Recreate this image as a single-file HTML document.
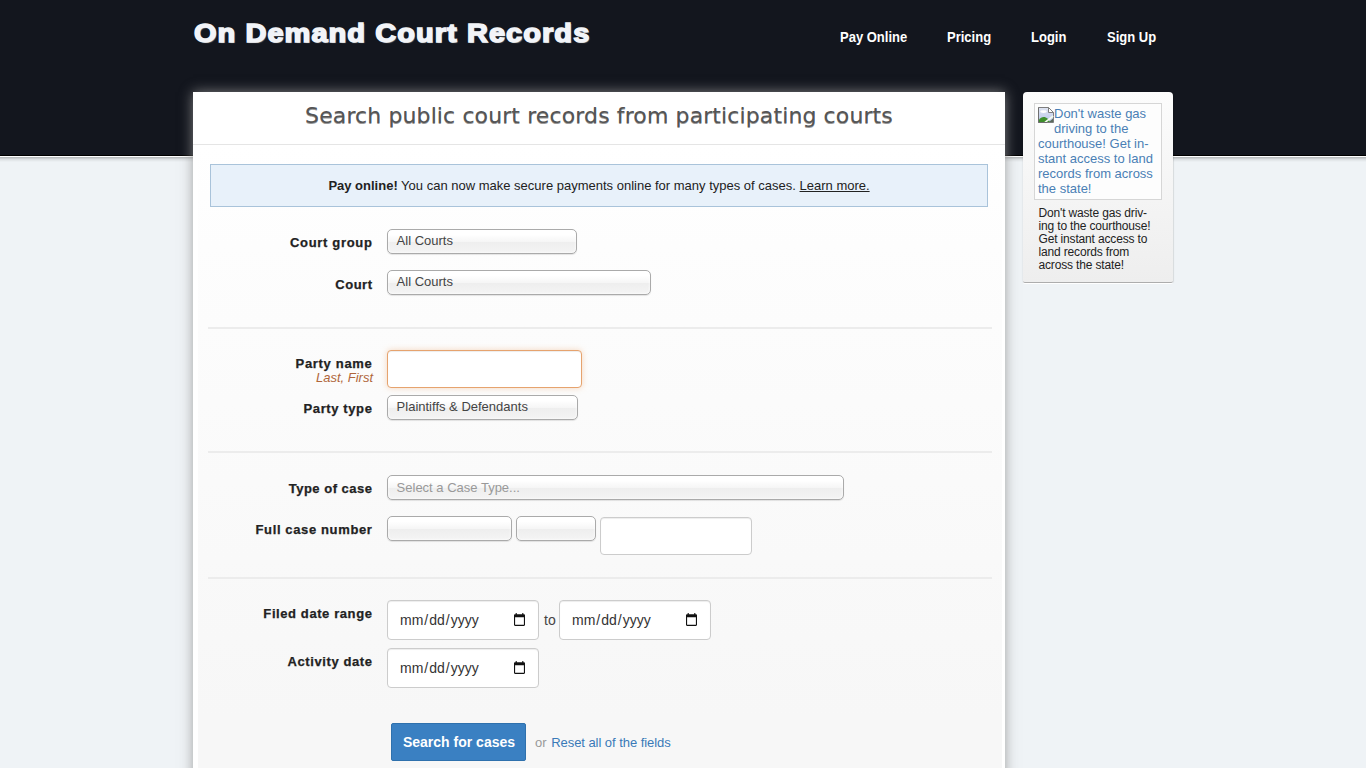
<!DOCTYPE html>
<html lang="en">
<head>
<meta charset="utf-8">
<title>On Demand Court Records</title>
<style>
*{box-sizing:border-box;}
html,body{margin:0;padding:0;}
body{width:1366px;height:768px;overflow:hidden;position:relative;background:#eff3f6;font-family:"Liberation Sans",Arial,sans-serif;font-size:13px;color:#222;}
a{text-decoration:none;color:inherit;}
#topband{position:absolute;left:0;top:0;width:1366px;height:156px;background:#13161e;border-bottom:1px solid #000;box-shadow:0 1px 0 #fff;}
#bandshadow{position:absolute;left:0;top:157px;width:1366px;height:5px;background:linear-gradient(rgba(0,0,0,.26),rgba(0,0,0,.08) 50%,rgba(0,0,0,0));}
#logo{position:absolute;left:194px;top:13px;margin:0;font-family:"Liberation Sans",Arial,sans-serif;font-weight:bold;font-size:26px;line-height:40px;color:#f2f4f8;white-space:nowrap;-webkit-text-stroke:1.5px #f2f4f8;text-shadow:1px 1px 1px #8a8a8a;letter-spacing:1px;transform:scale(1.111,.97);transform-origin:0 30px;}
#nav a{position:absolute;top:29px;font-weight:bold;font-size:14px;transform:scaleX(.929);transform-origin:0 0;line-height:16px;color:#fff;white-space:nowrap;}
#main{position:absolute;left:193px;top:92px;width:812px;height:700px;background:#fff;box-shadow:0 0 12px rgba(145,145,145,.85);}
#inner{position:absolute;left:5px;top:54px;width:804px;height:646px;background:linear-gradient(#ffffff 0px,#fdfdfd 100px,#f7f7f7 570px);}
#main h2{position:absolute;left:0;top:0;width:812px;height:53px;margin:0;border-bottom:1px solid #e5e5e5;background:#fff;text-align:center;font-family:"DejaVu Sans",Verdana,sans-serif;font-weight:normal;font-size:22px;line-height:48px;letter-spacing:.11px;color:#555;text-shadow:0 1px 0 #999;white-space:nowrap;}
#alert{position:absolute;left:17px;top:72px;width:778px;height:43px;border:1px solid #a9c3da;background:#e8f1fa;text-align:center;font-size:13px;line-height:41px;color:#222;white-space:nowrap;}
#alert a{text-decoration:underline;}
.lbl{position:absolute;left:0;width:179.5px;text-align:right;font-weight:bold;font-size:13px;line-height:16px;color:#222;white-space:nowrap;letter-spacing:.5px;-webkit-text-stroke:.25px #222;}
.hint{position:absolute;left:0;width:180px;text-align:right;font-style:italic;font-size:13px;line-height:14px;color:#b0663a;white-space:nowrap;}
.chosen{position:absolute;height:25px;border:1px solid #aaa;border-radius:5px;background:linear-gradient(#fff 20%,#f6f6f6 50%,#eee 52%,#f4f4f4 100%);box-shadow:0 0 3px #fff inset,0 1px 1px rgba(0,0,0,.1);padding-left:8.6px;font-size:13px;line-height:21px;color:#444;white-space:nowrap;overflow:hidden;}
.chosen.ph{color:#999;line-height:23px;}
.inp{position:absolute;height:38px;border:1px solid #ccc;border-radius:4px;background:#fff;box-shadow:inset 0 1px 1px rgba(0,0,0,.075);}
.inp.focus{border-color:#e6a36e;box-shadow:inset 0 1px 1px rgba(0,0,0,.075),0 0 6px rgba(238,162,100,.4);}
.date{position:absolute;width:152px;height:40px;border:1px solid #ccc;border-radius:4px;background:#fff;box-shadow:inset 0 1px 1px rgba(0,0,0,.075);font-size:14px;line-height:38px;color:#333;padding-left:11px;white-space:nowrap;}
.date span{padding:0 1px;}
.date svg{position:absolute;left:126px;top:12px;}
.hr{position:absolute;left:15px;width:784px;height:2px;background:#ececec;}
#btn{position:absolute;left:198px;top:631px;width:135px;height:38px;background:#3a80c2;border:1px solid #2f71ad;border-radius:2px;color:#fff;font-weight:bold;font-size:14px;line-height:36px;text-align:center;white-space:nowrap;padding-left:1px;}
#or{position:absolute;left:342px;top:643px;font-size:13px;line-height:15px;color:#999;white-space:nowrap;}
#or a{color:#3a7ab8;margin-left:1px;letter-spacing:-.05px;}
#side{position:absolute;left:1023px;top:92px;width:150px;height:191px;border-radius:4px 4px 2px 2px;background:linear-gradient(#fcfcfc,#eee);border-bottom:1px solid #adadad;box-shadow:0 1px 0 #fff,1px 0 1px rgba(0,0,0,.1),-1px 0 1px rgba(0,0,0,.04);}
#side .img{position:absolute;left:11px;top:11px;width:128px;height:97px;border:1px solid #d6d6d6;background:#fdfdfd;padding:2px 2px 0 3px;font-size:13px;line-height:15px;color:#4a7fb5;text-align:left;}
#side .img svg{float:left;margin:1px 0 0 0;}
#side .txt{position:absolute;left:15.5px;top:115px;width:118px;font-size:12px;line-height:13px;letter-spacing:-.16px;color:#222;}
</style>
</head>
<body>
<div id="topband"></div>
<div id="bandshadow"></div>
<h1 id="logo">On Demand Court Records</h1>
<div id="nav">
<a href="#" style="left:840px">Pay Online</a>
<a href="#" style="left:947px">Pricing</a>
<a href="#" style="left:1031px">Login</a>
<a href="#" style="left:1107px">Sign Up</a>
</div>
<div id="main">
<div id="inner"></div>
<h2>Search public court records from participating courts</h2>
<div id="alert"><b>Pay online!</b> You can now make secure payments online for many types of cases. <a href="#">Learn more.</a></div>

<div class="lbl" style="top:143px;letter-spacing:.67px">Court group</div>
<div class="chosen" style="left:194px;top:137px;width:190px">All Courts</div>
<div class="lbl" style="top:185px">Court</div>
<div class="chosen" style="left:194px;top:178px;width:264px">All Courts</div>
<div class="hr" style="top:235px"></div>

<div class="lbl" style="top:264px;letter-spacing:.68px">Party name</div>
<div class="hint" style="top:279px">Last, First</div>
<div class="inp focus" style="left:194px;top:258px;width:195px"></div>
<div class="lbl" style="top:309px;letter-spacing:.61px">Party type</div>
<div class="chosen" style="left:194px;top:303px;width:191px">Plaintiffs &amp; Defendants</div>
<div class="hr" style="top:359px"></div>

<div class="lbl" style="top:389px;letter-spacing:.5px">Type of case</div>
<div class="chosen ph" style="left:194px;top:383px;width:457px">Select a Case Type...</div>
<div class="lbl" style="top:430px;letter-spacing:.63px">Full case number</div>
<div class="chosen" style="left:194px;top:424px;width:125px"></div>
<div class="chosen" style="left:323px;top:424px;width:80px"></div>
<div class="inp" style="left:407px;top:425px;width:152px"></div>
<div class="hr" style="top:485px"></div>

<div class="lbl" style="top:514px;letter-spacing:.59px">Filed date range</div>
<div class="date" style="left:194px;top:508px"><span>mm</span>/<span>dd</span>/<span>yyyy</span><svg width="11" height="13" viewBox="2 1 20 22" preserveAspectRatio="none"><path fill="#111" d="M20 3h-1V1h-2v2H7V1H5v2H4c-1.1 0-2 .9-2 2v16c0 1.1.9 2 2 2h16c1.1 0 2-.9 2-2V5c0-1.1-.9-2-2-2zm0 18H4V8h16v13z"/></svg></div>
<div id="to" style="position:absolute;left:351px;top:520px;font-size:14px;line-height:16px;color:#444">to</div>
<div class="date" style="left:366px;top:508px"><span>mm</span>/<span>dd</span>/<span>yyyy</span><svg width="11" height="13" viewBox="2 1 20 22" preserveAspectRatio="none"><path fill="#111" d="M20 3h-1V1h-2v2H7V1H5v2H4c-1.1 0-2 .9-2 2v16c0 1.1.9 2 2 2h16c1.1 0 2-.9 2-2V5c0-1.1-.9-2-2-2zm0 18H4V8h16v13z"/></svg></div>
<div class="lbl" style="top:562px;letter-spacing:.59px">Activity date</div>
<div class="date" style="left:194px;top:556px"><span>mm</span>/<span>dd</span>/<span>yyyy</span><svg width="11" height="13" viewBox="2 1 20 22" preserveAspectRatio="none"><path fill="#111" d="M20 3h-1V1h-2v2H7V1H5v2H4c-1.1 0-2 .9-2 2v16c0 1.1.9 2 2 2h16c1.1 0 2-.9 2-2V5c0-1.1-.9-2-2-2zm0 18H4V8h16v13z"/></svg></div>

<a id="btn" href="#">Search for cases</a>
<div id="or">or <a href="#">Reset all of the fields</a></div>
</div>

<div id="side">
<div class="img"><svg width="16" height="16" viewBox="0 0 16 16"><defs><linearGradient id="sky" x1="0" y1="0" x2="0" y2="1"><stop offset="0" stop-color="#dfe4f1"/><stop offset="1" stop-color="#b9c6ea"/></linearGradient></defs><path d="M0.5 0.5H10.5L15.5 5.5V15.5H0.5Z" fill="url(#sky)" stroke="#7d7d7d"/><ellipse cx="5.5" cy="4.6" rx="3.2" ry="1.3" fill="#fff"/><path d="M1 15V12.5C3 9.5 7 9 9.5 11.5L12 15Z" fill="#3f8f2c"/><path d="M11 15L15 11.5V15Z" fill="#5a6a5a"/><path d="M7 15.3L15.2 9" stroke="#f4fbef" stroke-width="1.6" fill="none"/><path d="M10.5 0.5V5.5H15.5Z" fill="#fff" stroke="#7d7d7d" stroke-linejoin="round"/><path d="M0.5 0.5V15.5H9" fill="none" stroke="#6f6f6f"/></svg>Don't waste gas driving to the courthouse! Get in&shy;stant access to land records from across the state!</div>
<div class="txt">Don't waste gas driv&shy;ing to the courthouse! Get instant access to land records from across the state!</div>
</div>
</body>
</html>
